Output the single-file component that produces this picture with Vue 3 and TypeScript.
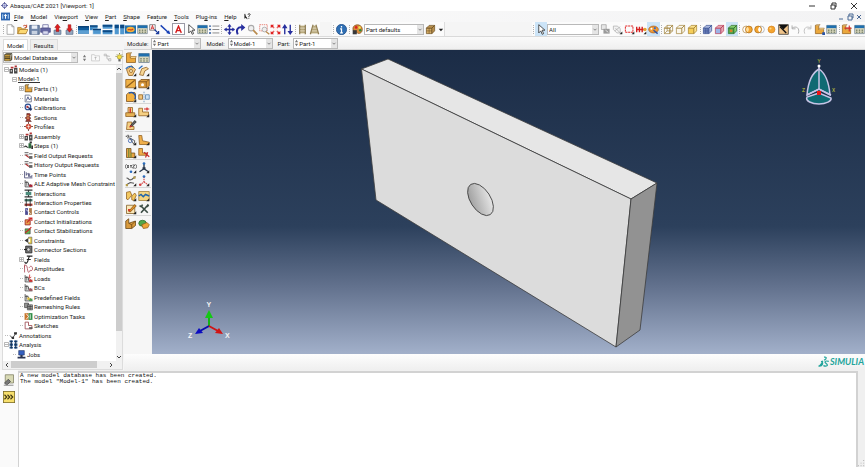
<script setup lang="ts">
import { ref } from 'vue'

interface Menu { pre: string; key: string; post: string }
interface TreeRow { label: string; icon?: string; depth: number; box?: '+' | '-'; current?: boolean }
interface Tool { icon: string; on?: boolean }

const amber = 'fill="#eba83c" stroke="#8d5c1c"'
const corner = '<path d="M15 11v4h-4z" fill="#222"/>'
const lPart = `<path d="M2 2h5v6h7v6H2z" ${amber}/><path d="M2 2l2-1h5l-2 1M7 8l1-2h7l-1 2" fill="#f9d58a" stroke="#8d5c1c" stroke-width=".7"/>`
const bars = (color: string) => `<path d="M2 2v12h13M5 4v8M8 7v5M11 9v3M2 6h6" fill="none" stroke="#444" stroke-width="1.5"/><path d="M9 10h6v4H9z" fill="${color}"/>`
const table = '<path d="M1 2h14v12H1z" fill="#d9d7bd" stroke="#6d7f90"/><path d="M1 2h14v4H1z" fill="#1f6fae"/><path d="M3 8h2v2H3zM7 8h2v2H7zM11 8h2v2h-2zM3 11h2v2H3zM7 11h2v2H7zM11 11h2v2h-2z" fill="#7e8870"/>'
const cube = (front: string, top: string, line: string) => `<path d="M2 6h8v8H2z" fill="${front}" stroke="${line}"/><path d="M2 6l4-4h8l-4 4zM10 14V6l4-4v8z" fill="${top}" stroke="${line}"/>`

const icons: Record<string, string> = {
  app: '<circle cx="8" cy="8" r="5" fill="#dfe1f4" stroke="#5a5f9c" stroke-width="2"/><path d="M8 0v5M8 11v5M0 8h5M11 8h5" stroke="#5a5f9c" stroke-width="2"/><circle cx="8" cy="8" r="2" fill="#7f86c7"/>',
  viewportDoc: '<path d="M0 1h16v14H0z" fill="#2e66b0"/><path d="M8 3l3 4H9v5H7V7H5z" fill="#fff"/><path d="M2 4h2v8H2zM12 4h2v8h-2z" fill="#a9cdf1"/>',
  fresh: '<path d="M3 1h7l3 3v11H3z" fill="#fff" stroke="#8a8a8a"/><path d="M10 1v3h3" fill="none" stroke="#8a8a8a"/>',
  open: '<path d="M1 5h5l1 2h6v7H1z" fill="#e9b53f" stroke="#a5762a"/><path d="M1 14l3-6h12l-3 6z" fill="#fbd873" stroke="#a5762a"/><path d="M9 3c2-2 4-1 5 1M14 1v4h-3" fill="none" stroke="#c44727" stroke-width="1.4"/>',
  save: '<path d="M1 2h14v13H1z" fill="#7187aa" stroke="#394f78"/><path d="M4 2h8v5H4z" fill="#e8edf5"/><path d="M4 10h8v5H4z" fill="#c7d1e0"/>',
  print: '<path d="M4 1h8v5H4z" fill="#f6f6ff" stroke="#5b5c91"/><path d="M1 6h14v6H1z" fill="#6567a5" stroke="#3e407c"/><path d="M4 10h8v5H4z" fill="#d9dbf0" stroke="#5b5c91"/>',
  dbUp: '<path d="M3 9h10v6H3z" fill="#96a9c2" stroke="#556b87"/><path d="M8 0l4 5h-2v6H6V5H4z" fill="#e01c1c" stroke="#8d1212" stroke-width=".7"/>',
  dbDown: '<path d="M3 9h10v6H3z" fill="#96a9c2" stroke="#556b87"/><path d="M8 12l4-5h-2V1H6v6H4z" fill="#e01c1c" stroke="#8d1212" stroke-width=".7"/>',
  winOne: '<path d="M0 3h16v11H0z" fill="#0f5b9b"/><path d="M0 9h16v5H0z" fill="#5d9fd2"/><path d="M0 3h16v2H0z" fill="#0b3f74"/>',
  winCascade: '<path d="M0 2h11v7H0z" fill="#3785c1"/><path d="M0 2h11v2H0z" fill="#0b3f74"/><path d="M4 7h12v8H4z" fill="#4f97cf" stroke="#fff" stroke-width=".7"/><path d="M4 7h12v2H4z" fill="#0b3f74"/>',
  winRows: '<path d="M1 1h14v6H1zM1 9h14v6H1z" fill="#4f97cf"/><path d="M1 1h14v3H1zM1 9h14v3H1z" fill="#0c4a85"/>',
  winCols: '<path d="M1 1h6v14H1zM9 1h6v14H9z" fill="#4f97cf"/><path d="M1 1h6v5H1zM9 1h6v5H9z" fill="#0c4a85"/>',
  link: '<path d="M0 2h16v12H0z" fill="#1f6fae"/><ellipse cx="8" cy="8" rx="6" ry="4" fill="#f6b23b"/><path d="M4 9c2-3 4 2 8-2" fill="none" stroke="#c43a1c" stroke-width="1.6"/>',
  table,
  annot: '<path d="M1 1h8v8H1z" fill="#fff" stroke="#555"/><path d="M3 8l2-6 2 6M3.500 6h3" fill="none" stroke="#c22" stroke-width="1.200"/><path d="M8 8l6 6M14 10v4h-4" fill="none" stroke="#1b3c9c" stroke-width="1.800"/>',
  arrowLine: '<path d="M1 2l12 11" stroke="#1740b5" stroke-width="2"/><path d="M15 15l-6-2 4-4z" fill="#1740b5"/>',
  textA: '<path d="M3 14L8 2l5 12M5 10h6" fill="none" stroke="#d51c1c" stroke-width="2.400"/>',
  cursor: '<path d="M4 1v12l3-3 2 5 2-1-2-5h4z" fill="#fff" stroke="#333" stroke-width="1.200"/>',
  list: '<path d="M5 3h10M5 8h10M5 13h10" stroke="#888" stroke-width="1.400"/><path d="M0 2h3v2H0zM0 7h3v2H0zM0 12h3v2H0z" fill="#335f9f"/>',
  pan: '<path d="M8 1v14M1 8h14" stroke="#272f9e" stroke-width="2"/><path d="M8 0l3 4H5zM8 16l3-4H5zM0 8l4-3v6zM16 8l-4-3v6z" fill="#272f9e"/>',
  rotate: '<path d="M4 15C1 9 4 4 10 5" fill="none" stroke="#272f9e" stroke-width="2.800"/><path d="M9 0l6 5-6 5z" fill="#272f9e"/>',
  magnify: '<circle cx="6" cy="6" r="4" fill="#efefef" stroke="#aaa" stroke-width="1.500"/><path d="M9 9l6 6" stroke="#b98b4e" stroke-width="2.500"/>',
  zoomBox: '<path d="M1 1h11v9H1z" fill="none" stroke="#e35a4a" stroke-dasharray="2 1"/><circle cx="8" cy="8" r="3.500" fill="#eee" stroke="#999"/><path d="M10 11l5 4" stroke="#b98b4e" stroke-width="2"/>',
  fit: '<path d="M1 6V1h5zM10 1h5v5zM15 10v5h-5zM6 15H1v-5z" fill="#e02222"/><path d="M3 3l10 10M13 3L3 13" stroke="#e02222" stroke-width="2"/><path d="M5 5h6v6H5z" fill="#fff3f0"/>',
  cycle: '<path d="M4 15V4M12 1v11" stroke="#272f9e" stroke-width="2"/><path d="M4 0l4 6H0zM12 16l4-6H8z" fill="#272f9e"/>',
  parallel: '<path d="M4 1v14M12 1v14M4 4h8M4 8h8M4 12h8" fill="none" stroke="#8d7c52" stroke-width="2"/><path d="M5 2h6v12H5z" fill="#c9bb8e" opacity=".7"/>',
  perspective: '<path d="M6 1L2 15M10 1l4 14M5 4h6M4 8h8M3 12h10" fill="none" stroke="#8d7c52" stroke-width="2"/><path d="M6 2h4l3 12H3z" fill="#c9bb8e" opacity=".7"/>',
  info: '<circle cx="8" cy="8" r="7.500" fill="#2f6fb3" stroke="#1c4a85"/><path d="M8 3v2M6 7h2v6M6 13h4" fill="none" stroke="#fff" stroke-width="1.800"/>',
  palette: '<path d="M2 4C6-1 15 1 15 8c0 5-5 7-7 5-1-2-3 0-5-2s-2-5-1-7z" fill="#d98c3a" stroke="#7c4717"/><circle cx="6" cy="5" r="2" fill="#d92323"/><circle cx="11" cy="5" r="1.800" fill="#f6e14a"/><circle cx="12" cy="9" r="1.800" fill="#2b8c3e"/><path d="M1 9h6v6H1z" fill="#38383a"/>',
  cubePair: cube('#d6ad66', '#b99150', '#6d5021') + '<path d="M2 10h8M6 6v8" stroke="#6d5021" stroke-width=".8"/>',
  copySel: '<path d="M2 1h7v7H2z" fill="#e7e7e7" stroke="#999"/><path d="M5 7h9v7H5z" fill="#9a9a9a"/><path d="M8 9l4 3" stroke="#fff"/>',
  hide: '<path d="M2 3h6l4 4v6H7L2 8zM5 6l8 8M4 10l8-6" fill="#f2f2f2" stroke="#aaa"/>' + corner,
  rectSel: '<path d="M2 3h11v9H2z" fill="none" stroke="#e12a2a" stroke-width="1.500" stroke-dasharray="3 1"/>' + corner,
  dotsSel: '<path d="M1 4v8M5 4v8M9 4v8M1 8h11" stroke="#d52020" stroke-width="2"/><circle cx="13" cy="8" r="2.500" fill="#e5a333"/>' + corner,
  paletteBlue: '<ellipse cx="8" cy="8" rx="7" ry="5" fill="#ef9a35" stroke="#a3571b"/><circle cx="5" cy="7" r="1.500" fill="#fff"/><circle cx="10" cy="6" r="1.500" fill="#2b6bd1"/><path d="M8 9l6 5" stroke="#2c51a1" stroke-width="2"/>',
  wire: cube('none', 'none', '#a08038') + '<path d="M6 2v8h8M6 10l-4 4" fill="none" stroke="#a08038"/>',
  hidden: cube('#fbf7ec', '#fbf7ec', '#a08038'),
  shaded: cube('#f5cd58', '#fbe28e', '#a57f27'),
  meshBlue: cube('#7a8fc6', '#a9b7dd', '#384f91') + '<path d="M5 6v8M7.500 6v8M2 9h8M2 11.500h8" stroke="#384f91" stroke-width=".8"/>',
  meshRed: cube('#9db3e6', '#e6a7b2', '#b83b56'),
  meshGreen: cube('#3fae4c', '#84cf6f', '#2b6a26') + '<path d="M4 8h4v4H4z" fill="#d97f2b"/>',
  both: '<circle cx="6" cy="8" r="5" fill="#fff" stroke="#b0813c"/><circle cx="10" cy="8" r="5" fill="#f5a530" stroke="#a46b1a"/><path d="M8 4a5 5 0 010 8 5 5 0 010-8" fill="#ffe0a0"/>',
  leftOnly: '<circle cx="10" cy="8" r="5" fill="#fff" stroke="#a0a0a0"/><circle cx="6" cy="8" r="5" fill="#f5a530" stroke="#a46b1a"/><path d="M8 4a5 5 0 010 8 5 5 0 010-8" fill="#fff"/>',
  ball: '<circle cx="8" cy="8" r="5" fill="#f5a530" stroke="#d3801c"/><circle cx="6.500" cy="6.500" r="1.500" fill="#ffd98c"/>',
  invert: '<path d="M1 1h14v14H1z" fill="#f0c48a" stroke="#222"/><path d="M1 1h14L8 8z" fill="#111"/><path d="M3 4l9 9" stroke="#111" stroke-width="2" fill="none"/>',
  undo: '<path d="M3 6c6-4 12 0 9 8M3 2v5h5" fill="none" stroke="#a9a9a9" stroke-width="1.300"/>',
  redo: '<path d="M13 6C7 2 1 6 4 14M13 2v5H8" fill="none" stroke="#bdbdbd" stroke-width="1.300"/>',
  lPart,
  lPartDot: lPart + '<path d="M12 12h4v4h-4z" fill="#2a55a8"/>',
  lPartRed: lPart + '<path d="M5 6h10M12 2v9" stroke="#d32929" stroke-width="1.600"/>',
  bolt: '<path d="M2 6l7-5 5 5-4 8H5z" fill="#f3c57a" stroke="#8d5c1c"/><path d="M1 5c4-4 8-4 10-1" fill="none" stroke="#2a6dbd" stroke-width="1.500"/><circle cx="8" cy="8" r="2" fill="#fff1cd" stroke="#8d5c1c"/>' + corner,
  shell: '<path d="M2 13l3-8 6-2 3 2-5 3-2 6z" fill="#f8d796" stroke="#8d5c1c"/><path d="M1 5l5-4" stroke="#2a6dbd" stroke-width="1.500"/>' + corner,
  planar: '<path d="M1 2h13v11H1z" fill="#f0b247" stroke="#8d5c1c"/><path d="M2 12L13 3" stroke="#8d5c1c" stroke-width="1.500"/>' + corner,
  cut: '<path d="M1 5l3-3h11v8l-3 3H1z" fill="#dd9c3c" stroke="#764a15"/><path d="M1 5h10v8M11 5l4-3" fill="none" stroke="#764a15"/><circle cx="6" cy="9" r="2" fill="#fff"/>' + corner,
  round: '<path d="M2 5l3-3h8l1 2v7l-3 3H2z" fill="#f3b040" stroke="#764a15"/><path d="M5 3c5-3 11 2 8 8" fill="none" stroke="#2456a8" stroke-width="1.800"/>' + corner,
  mirror: '<path d="M1 5h5v6H1z" fill="#f3c57a" stroke="#8d5c1c"/><path d="M10 5h5v6h-5z" fill="#cfe3f5" stroke="#4c7faf"/><path d="M8 1v14" stroke="#4c7faf" stroke-dasharray="2 1"/>',
  partRed: '<path d="M4 2h6v7H4z" fill="#f5d084" stroke="#8d5c1c"/><path d="M1 9h12v5H1z" fill="#e6b256" stroke="#8d5c1c"/><path d="M7 3v6" stroke="#d32929" stroke-width="1.800"/>' + corner,
  partMove: '<path d="M1 3h5v5h8v5H1z" fill="#f5d084" stroke="#8d5c1c"/><path d="M8 4h7M12 2v4" stroke="#d32929" stroke-width="1.600"/>' + corner,
  partErase: '<path d="M3 4h6v6h3v4H2z" fill="#f5d084" stroke="#8d5c1c"/><path d="M7 9l6-7 2 2-6 6z" fill="#666" stroke="#222"/><path d="M6 11l3-2" stroke="#d32929" stroke-width="2"/>',
  datumPick: '<path d="M1 3h8M4 1v5" stroke="#333" stroke-width="1.300" stroke-dasharray="2 1"/><path d="M6 5l6 9 1-5z" fill="#fff" stroke="#333"/><circle cx="7" cy="9" r="2.500" fill="none" stroke="#2a55a8"/>' + corner,
  lFlat: '<path d="M1 2h4l1 7 9 2v3H2z" fill="#efaf4b" stroke="#8d5c1c"/>' + corner,
  lBlock: '<path d="M2 2h6v6h5v6H2z" fill="#e7a443" stroke="#6f4a17"/><path d="M5 2v12M8 8v6" stroke="#6f8a37" stroke-width="1.500"/>' + corner,
  lScissor: '<path d="M1 2h5v6h6v3H1z" fill="#efaf4b" stroke="#8d5c1c"/><path d="M8 7l7 6M13 7l-3 7" stroke="#c42a2a" stroke-width="1.600"/>',
  xyz: '<path d="M2 3c-2 2-2 4 0 6M14 3c2 2 2 4 0 6M3 4l2 4M5 4L3 8M7 4l1 2 1-2M8 6v2M10 4h3l-3 4h3" fill="none" stroke="#333"/><circle cx="8" cy="13" r="1.800" fill="#2c6cc0"/>' + corner,
  triad: '<path d="M8 2v7L2 13M8 9l6 4" fill="none" stroke="#26354a" stroke-width="1.800"/><circle cx="8" cy="2" r="1.800" fill="#2a6dbd"/><path d="M6 7h4v3H6z" fill="#26354a"/>' + corner,
  axis: '<path d="M2 4c4 0 2 4 7 2l5-4M2 13l5-3 5 1" fill="none" stroke="#555" stroke-width="1.500"/><path d="M1 12h3v3H1zM11 2h3v3h-3z" fill="#b49b49"/>' + corner,
  triadRed: '<path d="M8 2v7l-5 4M8 9l5 4" fill="none" stroke="#d64545" stroke-width="1.500" stroke-dasharray="2 1"/><circle cx="8" cy="2" r="1.800" fill="#2a6dbd"/><circle cx="3" cy="13" r="1.800" fill="#d64545"/>' + corner,
  chain: '<path d="M2 3l5-1 2 5-5 6-2-1z" fill="#f3c860" stroke="#8d5c1c"/><path d="M9 8l4-4 2 3-3 7-3-1z" fill="#f3c860" stroke="#8d5c1c"/>' + corner,
  wave: '<path d="M1 2h14v12H1z" fill="#f4d580" stroke="#9b7a35"/><path d="M1 8l3-2 3 3 3-3 5 2" fill="none" stroke="#2266aa" stroke-width="2"/>' + corner,
  editNote: '<path d="M2 3h11v11H2z" fill="#fbe8ba" stroke="#7c5a22"/><path d="M5 11l8-9 2 2-8 8z" fill="#e59425" stroke="#7c4a12"/><path d="M4 8h3v3H4z" fill="#d43c2a"/>' + corner,
  wrench: '<path d="M4 4l9 9M12 4L4 13" stroke="#3b4c44" stroke-width="2.200"/><path d="M1 4l3 2 3-3-2-2v2H3zM11 4l2-3 2 2-2 3z" fill="#3b4c44"/>',
  assembleBlock: '<path d="M1 4l4-3v6l9-3v6l-5 4H1z" fill="#d99a3c" stroke="#664311"/><path d="M5 7l4 2v5M9 9l5-5" fill="none" stroke="#664311"/>',
  greenBlob: '<ellipse cx="6" cy="7" rx="5" ry="4" fill="#53a849" stroke="#2d6f2a"/><path d="M5 9l7-3 3 3-2 4-6 1z" fill="#efa536" stroke="#8d5c1c"/>',
  dbase: '<path d="M1 3h10v11H1z" fill="#d9a73f" stroke="#2b2b20"/><path d="M1 3l3-2h10l-3 2M11 14l3-2V1" fill="#6f5c2c" stroke="#2b2b20"/><path d="M1 7h10M1 10h10" stroke="#2b2b20" stroke-width="1.500"/>',
  bulb: '<circle cx="8" cy="7" r="4" fill="#f2dd46" stroke="#8d8426"/><path d="M6 11h4v4H6z" fill="#666"/><path d="M8 0v2M1 6h2M13 6h2M3 2l1 1M13 2l-1 1" stroke="#77711e" stroke-width="1.500"/>',
  upDir: '<path d="M1 3h5l1 2h8v9H1z" fill="#fafafa" stroke="#b5b5b5"/><path d="M8 12V7M6 9l2-2 2 2" fill="none" stroke="#a0a0a0"/>',
  filterTree: '<path d="M3 3l4 2v5l5 3M7 5l5 1" fill="none" stroke="#b0b0b0" stroke-width="1.500"/><path d="M2 2h4v3H2zM10 10h4v4h-4z" fill="#eee" stroke="#aaa"/>',
  models: '<path d="M1 7h6v8H1zM9 5h6v10H9z" fill="#444"/><path d="M3 3h5v3H3zM10 1h4v3h-4z" fill="#b33434"/><path d="M3 9h2v3H3zM11 8h2v3h-2z" fill="#ddd"/>',
  parts: lPart.replace(/#8d5c1c/g, '#3e2b0d'),
  materials: '<path d="M2 2h8l3 3v9H2z" fill="#fff" stroke="#6a6f86" stroke-width="1.500"/><path d="M4 12l3-7 2 5 4-2" fill="none" stroke="#3d497f" stroke-width="1.500"/>',
  calib: '<circle cx="7" cy="7" r="5" fill="#eef" stroke="#2a4d8f" stroke-width="2"/><path d="M5 6l7 8 3-4z" fill="#1e3668"/><circle cx="6" cy="7" r="2" fill="#b43535"/>',
  sections: '<path d="M5 1h5l2 3-3 2 3 3-2 3 3 3H3l2-4-3-2 3-3z" fill="#a63b32" stroke="#51201b"/><path d="M5 5h4M5 9h4" stroke="#f0c170" stroke-width="1.500"/>',
  profiles: '<path d="M8 0v16M0 8h16" stroke="#5b3b34" stroke-width="1.500"/><circle cx="8" cy="8" r="5" fill="#d0503c"/><path d="M8 4v8M5 8h6" stroke="#fff"/>',
  steps: '<path d="M1 11a2 2 0 014 0M5 11h3" stroke="#333" stroke-width="2" fill="none"/><path d="M8 4h5v9H8z" fill="#2d6b3e"/><path d="M10 1h4v3h-4zM13 8h3v6h-3z" fill="#333"/>',
  output: '<path d="M1 3h7M1 7h7M9 5h6" stroke="#444" stroke-width="1.500"/><path d="M3 7l5 4h6" fill="none" stroke="#b03030" stroke-width="2"/><path d="M9 9h6v5H9z" fill="#666"/>',
  time: '<path d="M1 2v12h14M4 4v6M4 8l4-2v6M10 6v6h4V9" fill="none" stroke="#4b4d78" stroke-width="1.500"/>',
  ale: bars('#a23'),
  inter: '<path d="M1 2h14M8 2v12M1 14h14" stroke="#333" stroke-width="2"/><path d="M3 5h10v6H3z" fill="#4c8b7b"/>',
  interProp: '<path d="M1 2h14v4H1z" fill="#3d6f62"/><path d="M1 10h14v4H1z" fill="#a13b35"/><path d="M4 1v14M11 1v14" stroke="#222" stroke-width="1.500"/>',
  control: '<path d="M2 2h5v12H2z" fill="#4c4c93"/><path d="M9 2h5v12H9z" fill="#ad7a4b"/><path d="M3 4l9 8" stroke="#eee" stroke-width="1.500"/>',
  init: '<path d="M2 5h9v9H2z" fill="#e9a14c" stroke="#9b2323" stroke-width="1.500"/><path d="M5 10l8-8M8 2h6v5" fill="none" stroke="#c72727" stroke-width="2"/>',
  stab: '<path d="M2 5h9v9H2z" fill="#62b04f" stroke="#333"/><path d="M5 10l8-8M2 12l9-7" fill="none" stroke="#c72727" stroke-width="2"/>',
  constraints: '<path d="M1 8l6-4v8z" fill="#333"/><path d="M8 2h6v12H8z" fill="#e3c944" stroke="#555"/><path d="M8 5h3v6H8z" fill="#fff"/>',
  connector: '<path d="M3 2h11v12H3z" fill="#777" stroke="#222" stroke-width="1.500"/><circle cx="8" cy="8" r="3" fill="#ddd" stroke="#222"/><path d="M0 8h5" stroke="#222" stroke-width="2"/>',
  fields: '<path d="M5 2h10M10 2c-3 3-2 10-5 12-2 1-4 0-3-2M5 8h7" fill="none" stroke="#222" stroke-width="2"/>',
  amp: '<path d="M0 8C1 0 5 0 6 8s3 9 5 3M1 15V1M9 7c2-4 5-4 6 0s-2 6-4 4" fill="none" stroke="#a94452" stroke-width="1.400"/>',
  loads: bars('#c33') + '<path d="M10 1v6M8 5l2 3 3-3" stroke="#c33" stroke-width="1.500" fill="none"/>',
  bcs: bars('#9a5560'),
  predef: bars('#4b9a4b') + '<path d="M6 8h4v4H6z" fill="#e7c23f"/>',
  remesh: '<path d="M1 2h7v8H1z" fill="#999" stroke="#222"/><path d="M6 5h9v9H6z" fill="#ccc" stroke="#222"/><path d="M6 8h9M6 11h9M9 5v9M12 5v9" stroke="#222"/>',
  optim: '<path d="M1 2h7v12H1z" fill="#c9762d"/><path d="M8 2h7v12H8z" fill="#2f8d47"/><path d="M4 3l4 5-4 5M11 4v8" stroke="#fff" stroke-width="1.500" fill="none"/>',
  sketches: '<path d="M2 2v12h12V8H8V2z" fill="#fff" stroke="#9b4850" stroke-width="1.500"/><path d="M9 11h6v3H9z" fill="#555"/>',
  annotations: '<path d="M2 8l4 5 7-10" fill="none" stroke="#333" stroke-width="1.500"/><path d="M9 2h5v4H9zM5 10h4v4H5z" fill="#333"/>',
  analysis: '<path d="M1 1h6v3H1zM1 6h6v4H1zM1 12h6v3H1zM9 1h6v3H9zM9 6h6v4H9zM9 12h6v3H9z" fill="#23528b"/><path d="M4 1v14M12 1v14" stroke="#16304f" stroke-width="2"/>',
  jobs: '<path d="M3 1h10v8H3z" fill="#3560c0" stroke="#1d2e5e"/><path d="M6 9h4v3H6zM1 12h14v3H1z" fill="#2c3552"/>',
  message: '<path d="M3 1h11v11H3z" fill="#d8d9b4" stroke="#7d7e60"/><path d="M2 12l5-5 3 3-5 5z" fill="#777" stroke="#444"/><path d="M1 15h13" stroke="#999" stroke-width="1.500"/>',
  prompt: '<path d="M0 0h16v16H0z" fill="#f7df6d" stroke="#75682b" stroke-width="2"/><path d="M2 5l3 3-3 3M6 5l3 3-3 3M10 5l3 3-3 3" fill="none" stroke="#3d3614" stroke-width="1.500"/>',
  helpCursor: '<path d="M2 2v10l3-3 2 5" fill="#222" stroke="#222" stroke-width="2"/><path d="M9 4c0-3 6-3 5 0-1 2-3 2-3 5M11 11v2" fill="none" stroke="#222" stroke-width="2"/>',
}

const menus: Menu[] = [
  { pre: '', key: 'F', post: 'ile' }, { pre: '', key: 'M', post: 'odel' }, { pre: 'Vie', key: 'w', post: 'port' },
  { pre: '', key: 'V', post: 'iew' }, { pre: '', key: 'P', post: 'art' }, { pre: '', key: 'S', post: 'hape' },
  { pre: 'Fea', key: 't', post: 'ure' }, { pre: '', key: 'T', post: 'ools' }, { pre: 'Plu', key: 'g', post: '-ins' },
  { pre: '', key: 'H', post: 'elp' },
]

const t = (names: string, on: string[] = []): Tool[] => names.split(' ').map((icon) => ({ icon, on: on.includes(icon) }))

const mainTools: Tool[][] = [
  t('fresh open save print dbUp dbDown'),
  t('winOne winCascade winRows winCols link table annot arrowLine textA cursor table list'),
  t('pan rotate magnify zoomBox fit cycle'),
  t('parallel perspective'),
]
const selectTools = t('copySel hide rectSel dotsSel paletteBlue', ['paletteBlue'])
const displayTools: Tool[][] = [
  t('wire hidden shaded'),
  t('meshBlue meshRed meshGreen', ['meshGreen']),
  t('both leftOnly ball invert undo redo lPartDot table'),
  t('lPartRed table'),
]
const toolbox: string[][] = [
  ['lPart', 'table', 'bolt', 'shell', 'planar', 'cut', 'round', 'mirror'],
  ['partRed', 'partMove', 'partErase'],
  ['datumPick', 'lFlat', 'lBlock', 'lScissor'],
  ['xyz', 'triad', 'axis', 'triadRed'],
  ['chain', 'wave', 'editNote', 'wrench'],
  ['assembleBlock', 'greenBlob'],
]

const leaf = (label: string, icon: string, box?: '+' | '-'): TreeRow => ({ label, icon, depth: 2, box })
const tree: TreeRow[] = [
  { label: 'Models (1)', icon: 'models', depth: 0, box: '-' },
  { label: 'Model-1', depth: 1, box: '-', current: true },
  leaf('Parts (1)', 'parts', '+'),
  leaf('Materials', 'materials'),
  leaf('Calibrations', 'calib'),
  leaf('Sections', 'sections'),
  leaf('Profiles', 'profiles'),
  leaf('Assembly', 'models', '+'),
  leaf('Steps (1)', 'steps', '+'),
  leaf('Field Output Requests', 'output'),
  leaf('History Output Requests', 'output'),
  leaf('Time Points', 'time'),
  leaf('ALE Adaptive Mesh Constraint', 'ale'),
  leaf('Interactions', 'inter'),
  leaf('Interaction Properties', 'interProp'),
  leaf('Contact Controls', 'control'),
  leaf('Contact Initializations', 'init'),
  leaf('Contact Stabilizations', 'stab'),
  leaf('Constraints', 'constraints'),
  leaf('Connector Sections', 'connector'),
  leaf('Fields', 'fields', '+'),
  leaf('Amplitudes', 'amp'),
  leaf('Loads', 'loads'),
  leaf('BCs', 'bcs'),
  leaf('Predefined Fields', 'predef'),
  leaf('Remeshing Rules', 'remesh'),
  leaf('Optimization Tasks', 'optim'),
  leaf('Sketches', 'sketches'),
  { label: 'Annotations', icon: 'annotations', depth: 0 },
  { label: 'Analysis', icon: 'analysis', depth: 0, box: '-' },
  { label: 'Jobs', icon: 'jobs', depth: 1 },
]

const contexts = [
  { id: 'module', label: 'Module:', value: 'Part', wide: true },
  { id: 'model', label: 'Model:', value: 'Model-1', wide: false },
  { id: 'part', label: 'Part:', value: 'Part-1', wide: false },
]

const activeTab = ref('Model')
</script>

<template>
  <div class="app">
    <header class="titlebar">
      <svg class="ico ico-s" viewBox="0 0 16 16" v-html="icons.app"></svg>
      <span>Abaqus/CAE 2021 [Viewport: 1]</span>
      <div class="window-controls">
        <button aria-label="Minimize"><svg viewBox="0 0 8 8"><path d="M1 4h6" /></svg></button>
        <button aria-label="Restore"><svg viewBox="0 0 8 8"><path d="M2 3h4v4H2zM3 3V1h4v4H6" /></svg></button>
        <button aria-label="Close"><svg viewBox="0 0 8 8"><path d="M1 1l6 6M7 1L1 7" /></svg></button>
      </div>
    </header>

    <nav class="menubar">
      <svg class="ico ico-m" viewBox="0 0 16 16" v-html="icons.viewportDoc"></svg>
      <button v-for="m in menus" :key="m.pre + m.key + m.post">{{ m.pre }}<u>{{ m.key }}</u>{{ m.post }}</button>
      <button aria-label="Context help"><svg class="ico ico-s" viewBox="0 0 16 16" v-html="icons.helpCursor"></svg></button>
      <div class="window-controls inner">
        <button aria-label="Minimize viewport"><svg viewBox="0 0 8 8"><path d="M2 6h4" /></svg></button>
        <button aria-label="Restore viewport"><svg viewBox="0 0 8 8"><path d="M2 3h4v4H2zM3 3V1h4v4H6" /></svg></button>
        <button aria-label="Close viewport"><svg viewBox="0 0 8 8"><path d="M2 2l4 4M6 2L2 6" /></svg></button>
      </div>
    </nav>

    <div class="toolbar">
      <div class="cluster cluster-main">
        <template v-for="(group, g) in mainTools" :key="g">
          <i class="grip"></i>
          <button v-for="(tool, n) in group" :key="n" class="tool" :class="{ boxed: tool.icon === 'textA' }" :aria-label="tool.icon">
            <svg class="ico" viewBox="0 0 16 16" v-html="icons[tool.icon]"></svg>
          </button>
        </template>
      </div>
      <div class="cluster cluster-color">
        <i class="grip"></i>
        <button class="tool" aria-label="info"><svg class="ico" viewBox="0 0 16 16" v-html="icons.info"></svg></button>
        <i class="grip"></i>
        <button class="tool" aria-label="color code"><svg class="ico" viewBox="0 0 16 16" v-html="icons.palette"></svg></button>
        <span class="combo combo-color">
          <select aria-label="Color code"><option>Part defaults</option></select>
          <svg class="chev" viewBox="0 0 8 8"><path d="M2 3l2 2 2-2" /></svg>
        </span>
        <button class="tool" aria-label="translucency"><svg class="ico" viewBox="0 0 16 16" v-html="icons.cubePair"></svg></button>
        <svg class="caret" viewBox="0 0 8 8"><path d="M2 3h5L4.500 6z" /></svg>
      </div>
      <div class="cluster cluster-display">
        <i class="grip"></i>
        <button class="tool on" aria-label="select"><svg class="ico" viewBox="0 0 16 16" v-html="icons.cursor"></svg></button>
        <span class="combo combo-all">
          <select aria-label="Selection filter"><option>All</option></select>
          <svg class="chev" viewBox="0 0 8 8"><path d="M2 3l2 2 2-2" /></svg>
        </span>
        <button v-for="tool in selectTools" :key="tool.icon" class="tool" :class="{ on: tool.on }" :aria-label="tool.icon">
          <svg class="ico" viewBox="0 0 16 16" v-html="icons[tool.icon]"></svg>
        </button>
        <template v-for="(group, g) in displayTools" :key="g">
          <i class="grip"></i>
          <button v-for="tool in group" :key="tool.icon" class="tool" :class="{ on: tool.on }" :aria-label="tool.icon">
            <svg class="ico" viewBox="0 0 16 16" v-html="icons[tool.icon]"></svg>
          </button>
        </template>
      </div>
    </div>

    <main class="workspace">
      <aside class="side">
        <div class="tabs" role="tablist">
          <button v-for="tab in ['Model', 'Results']" :key="tab" role="tab" class="tab" :class="{ active: activeTab === tab }" @click="activeTab = tab">{{ tab }}</button>
        </div>
        <div class="panel">
          <div class="source">
            <span class="combo combo-db">
              <svg class="ico ico-m" viewBox="0 0 16 16" v-html="icons.dbase"></svg>
              <select aria-label="Database"><option>Model Database</option></select>
              <svg class="chev" viewBox="0 0 8 8"><path d="M2 3l2 2 2-2" /></svg>
            </span>
            <svg class="spin" viewBox="0 0 6 10"><path d="M1 4l2-3 2 3zM1 6l2 3 2-3z" /></svg>
            <button v-for="name in ['upDir', 'filterTree', 'bulb']" :key="name" class="plain" :aria-label="name">
              <svg class="ico ico-m" viewBox="0 0 16 16" v-html="icons[name]"></svg>
            </button>
          </div>
          <div class="tree-wrap">
            <ul class="tree" role="tree">
              <li v-for="row in tree" :key="row.label" role="treeitem" :class="'depth-' + row.depth">
                <span class="twig"><svg v-if="row.box" viewBox="0 0 7 7"><path d="M1.500 1.500h4v4h-4zM2 3.500h3" /><path v-if="row.box === '+'" d="M3.500 2v3" /></svg><i v-else></i></span>
                <svg v-if="row.icon" class="ico ico-m" viewBox="0 0 16 16" v-html="icons[row.icon]"></svg>
                <span class="name" :class="{ current: row.current }">{{ row.label }}</span>
              </li>
            </ul>
            <div class="vscroll">
              <svg viewBox="0 0 8 8"><path d="M2 5l2-2 2 2" /></svg>
              <i></i>
              <svg viewBox="0 0 8 8"><path d="M2 3l2 2 2-2" /></svg>
            </div>
          </div>
          <div class="hscroll">
            <svg viewBox="0 0 8 8"><path d="M5 2L3 4l2 2" /></svg>
            <i></i>
            <svg viewBox="0 0 8 8"><path d="M3 2l2 2-2 2" /></svg>
          </div>
        </div>
      </aside>

      <section class="stage">
        <div class="context">
          <template v-for="c in contexts" :key="c.id">
            <label :for="c.id">{{ c.label }}</label>
            <span class="combo combo-ctx" :class="{ wide: c.wide }">
              <svg class="spin" viewBox="0 0 6 10"><path d="M1 4l2-3 2 3zM1 6l2 3 2-3z" /></svg>
              <select :id="c.id"><option>{{ c.value }}</option></select>
              <svg class="chev" viewBox="0 0 8 8"><path d="M2 3l2 2 2-2" /></svg>
            </span>
          </template>
        </div>
        <div class="canvas-row">
          <div class="toolbox">
            <div v-for="(group, g) in toolbox" :key="g" class="box-group">
              <button v-for="name in group" :key="name" class="plain" :aria-label="name">
                <svg class="ico" viewBox="0 0 16 16" v-html="icons[name]"></svg>
              </button>
            </div>
          </div>
          <div class="viewport">
            <svg class="scene" viewBox="0 0 713 304" preserveAspectRatio="xMidYMid meet" aria-label="Part-1">
              <defs>
                <linearGradient id="bore" x1="0" y1="0.200" x2="1" y2="0.700">
                  <stop offset="0" stop-color="#9b9b9b" />
                  <stop offset="1" stop-color="#e8e8e8" />
                </linearGradient>
              </defs>
              <g stroke="#3c3c3c" stroke-width="0.800" stroke-linejoin="round">
                <path d="M209.500 19L236 9l269 124-26 16z" fill="#e6e6e6" />
                <path d="M209.500 19L479 149l-15 148L224 150z" fill="#dcdcdc" />
                <path d="M479 149l26-16-17 147-24 17z" fill="#929292" />
                <ellipse cx="328.500" cy="149.500" rx="10" ry="18" transform="rotate(-33 328.500 149.500)" fill="url(#bore)" />
              </g>
              <g class="compass">
                <path d="M667 19c-7 4-11 14-12 26l12-6 11 6c-1-12-5-22-11-26z" fill="#0f6a73" />
                <path d="M667 43l-12 4c-2 4 5 7 12 7s13-3 12-6z" fill="#0f6a73" />
                <path d="M667 17v22M655 45l12-6 12 6" fill="none" />
                <circle cx="667" cy="16" r="1.500" fill="#fff" />
                <rect x="665" y="41" width="4" height="4" />
                <text x="665.500" y="13">Y</text>
                <text x="650" y="42">Z</text>
                <text x="680" y="42">X</text>
              </g>
              <g class="triad">
                <path d="M57 276v-9" stroke="#14b414" />
                <path d="M57 276l-9 5" stroke="#0b0bb0" />
                <path d="M57 276l9 5" stroke="#d01414" />
                <path d="M57 260l4 8h-8z" fill="#14c814" />
                <path d="M43 284l4-6 4 5z" fill="#0b0bc0" />
                <path d="M71 284l-8-1 4-5z" fill="#d01414" />
                <text x="54.500" y="257">Y</text>
                <text x="36" y="288">Z</text>
                <text x="73" y="288">X</text>
              </g>
            </svg>
          </div>
        </div>
        <div class="brand">
          <svg viewBox="0 0 20 20"><path d="M10 2c5-1 5 3 0 5M8 8c-2 6-4 8-7 9 7 1 9-7 4-8M18 9c-7-2-8 1-4 4s0 5-5 3" /></svg>
          <span>SIMULIA</span>
        </div>
      </section>
    </main>

    <footer class="messages">
      <div class="message-tabs">
        <button aria-label="Message area"><svg class="ico" viewBox="0 0 16 16" v-html="icons.message"></svg></button>
        <button aria-label="Command line"><svg class="ico" viewBox="0 0 16 16" v-html="icons.prompt"></svg></button>
      </div>
      <div class="log" role="log">
        <p>A new model database has been created.</p>
        <p>The model "Model-1" has been created.</p>
      </div>
      <div class="log-scroll"><svg viewBox="0 0 8 8"><path d="M6 0h1v1H6zM3 3h1v1H3zM6 3h1v1H6zM0 6h1v1H0zM3 6h1v1H3zM6 6h1v1H6z" /></svg></div>
    </footer>
  </div>
</template>

<style>
body { margin: 0; background: #f0f0f0; }
</style>

<style scoped>
.app { display: flex; flex-direction: column; height: 100vh; min-height: 440px; overflow: hidden; background: #f5f5f5; color: #222; font: 6px/9px Roboto, "Noto Sans", sans-serif; }
button { display: flex; align-items: center; justify-content: center; margin: 0; padding: 0; border: 0; background: none; color: inherit; font: inherit; }
select { flex: 1; min-width: 0; height: 100%; padding: 0; border: 0; outline: 0; appearance: none; background: none; color: inherit; font: inherit; }
svg { display: block; flex: none; }
.ico { width: 12px; height: 12px; }
.ico-m { width: 9px; height: 9px; }
.ico-s { width: 7px; height: 7px; }

.titlebar { display: flex; align-items: center; gap: 2px; height: 11px; flex: none; padding-left: 1px; background: #fff; }
.window-controls { display: flex; gap: 13px; margin-left: auto; padding-right: 7px; }
.window-controls svg { width: 8px; height: 8px; fill: none; stroke: #333; stroke-width: 1; }
.window-controls.inner { gap: 1px; padding-right: 2px; }
.window-controls.inner svg { stroke: #4b6a95; }
.menubar { display: flex; align-items: center; gap: 7px; height: 11px; flex: none; padding-left: 1px; background: linear-gradient(90deg, #fcfcfc, #f3f3f4); }
.menubar .ico-m { margin-right: -3px; }
.menubar button { display: block; }
u { text-underline-offset: 1px; }

.toolbar { display: flex; flex: none; height: 14px; border-bottom: 1px solid #dadada; background: #f5f5f5; }
.cluster { display: flex; align-items: center; background: #fbfbfb; }
.cluster-main { flex: none; width: 318px; padding-left: 2px; }
.cluster-color { flex: none; margin-left: 12px; border-right: 1px solid #ddd; }
.cluster-display { flex: none; width: 333px; margin-left: auto; }
.grip { flex: none; width: 1px; height: 9px; margin: 0 1px; border-left: 1px dotted #b0b0b0; box-sizing: border-box; }
.tool { flex: 1 1 0; min-width: 0; height: 14px; }
.cluster-color .tool { flex: 0 0 13px; }
.cluster .ico { width: 11px; height: 11px; }
.tool.on { background: #cce4f7; }
.tool.boxed { height: 12px; border: 1px solid #9a9aa5; background: #fff; box-sizing: border-box; }
.tool.boxed .ico { width: 9px; height: 9px; }
.combo { display: flex; align-items: center; flex: none; height: 11px; box-sizing: border-box; border: 1px solid #b9b9b9; background: #fff; }
.chev { width: 6px; height: 100%; background: #e5e5e5; fill: none; stroke: #666; stroke-width: 1; }
.spin { width: 5px; height: 8px; fill: #777; }
.combo-color { width: 60px; padding-left: 1px; }
.combo-all { width: 52px; padding-left: 1px; }
.caret { width: 7px; height: 7px; fill: #222; }

.workspace { display: flex; flex: 1; min-height: 0; }
.side { display: flex; flex-direction: column; flex: none; width: 124px; padding: 2px 1px 0 2px; box-sizing: border-box; }
.tabs { display: flex; gap: 2px; height: 11px; padding-left: 1px; }
.tab { padding: 0 3px; border: 1px solid #ddd; border-bottom: 0; background: #efefef; }
.tab.active { background: #fff; }
.panel { display: flex; flex: 1; flex-direction: column; min-height: 0; border: 1px solid #dcdcdc; background: #fff; }
.source { display: flex; align-items: center; gap: 3px; height: 13px; flex: none; background: #f7f7f7; }
.combo-db { width: 75px; height: 11px; }
.combo-db .ico { margin-right: 1px; }
.plain { width: 12px; height: 13px; }
.source .plain { width: 9px; }
.source .spin { margin: 0 1px; }
.tree-wrap { display: flex; flex: 1; min-height: 0; border-top: 1px solid #dedede; }
.tree { display: grid; flex: 1; grid-auto-rows: minmax(0, 1fr); min-width: 0; margin: 0; padding: 0 0 2px; overflow: hidden; list-style: none; }
.tree li { display: flex; align-items: center; white-space: nowrap; }
.depth-1 { padding-left: 8px; }
.depth-2 { padding-left: 15px; }
.twig { display: flex; flex: none; justify-content: center; width: 6px; }
.twig svg { width: 7px; height: 7px; fill: none; stroke: #9a9a9a; stroke-width: 0.700; }
.twig i { width: 3px; border-top: 1px dotted #bbb; }
.name { margin-left: 1px; }
.name.current { border-bottom: 1px solid #333; line-height: 7px; }
.vscroll { display: flex; flex: none; flex-direction: column; align-items: center; width: 6px; background: #f1f1f1; }
.vscroll svg, .hscroll svg { width: 8px; height: 8px; fill: none; stroke: #444; stroke-width: 1; }
.vscroll i { flex: 1; width: 6px; margin-bottom: 22px; background: #cdcdcd; }
.hscroll { display: flex; flex: none; height: 8px; background: #f1f1f1; }
.hscroll i { flex: 1; margin: 0 10px 1px 0; background: #cdcdcd; }
.hscroll svg:last-child { margin-right: 7px; }

.stage { display: flex; flex: 1; flex-direction: column; min-width: 0; }
.context { display: flex; align-items: center; flex: none; height: 12px; border-bottom: 1px solid #d4d4d4; background: linear-gradient(#fafafa, #efefef); }
.context label { margin: 0 3px; }
.combo-ctx { width: 45px; height: 11px; margin-right: 2px; }
.combo-ctx.wide { width: 50px; }
.canvas-row { display: flex; flex: 1; min-height: 0; }
.toolbox { flex: none; width: 26px; padding: 1px 0 0 1px; margin-right: 1px; background: #f6f6f6; }
.box-group { display: grid; grid-template-columns: 13px 12px; grid-auto-rows: 13px; margin-bottom: 1px; border-bottom: 1px solid #d6d6d6; }
.box-group:last-child { border: 0; }
.viewport { display: flex; flex: 1; min-width: 0; background: linear-gradient(#1b2c46 0%, #2c405c 58%, #63728e 78%, #a2b0ca 100%); }
.scene { width: 100%; height: 100%; }
.compass path { stroke: #c6c4e6; stroke-width: 1.500; }
.compass rect { fill: #ee1515; }
.compass text { fill: #c9c93a; font-size: 5px; }
.triad path { stroke-width: 2; }
.triad text { fill: #f3f3f3; font: bold 7px "Liberation Sans", sans-serif; }
.brand { display: flex; align-items: center; justify-content: flex-end; flex: none; height: 16px; padding-right: 1px; background: linear-gradient(#fdfdfd, #efefef); color: #22a49b; font: italic bold 9px/10px Lato, sans-serif; }
.brand svg { width: 12px; height: 12px; fill: none; stroke: #22a49b; stroke-width: 2; }

.messages { display: flex; flex: none; height: 97px; background: #f0f0f0; }
.message-tabs { display: flex; flex-direction: column; flex: none; gap: 4px; width: 18px; padding-top: 3px; box-sizing: border-box; background: #fafafa; }
.message-tabs button { height: 13px; }
.log { flex: 1; min-width: 0; margin-top: 1px; padding: 0 1px; border: solid #d2d2d2; border-width: 2px 2px 0 1px; background: #fff; color: #111; font: 6px/6px "Liberation Mono", monospace; }
.log p { margin: 0; }
.log-scroll { display: flex; align-items: flex-end; width: 7px; }
.log-scroll svg { width: 7px; height: 7px; fill: #aaa; }
</style>
